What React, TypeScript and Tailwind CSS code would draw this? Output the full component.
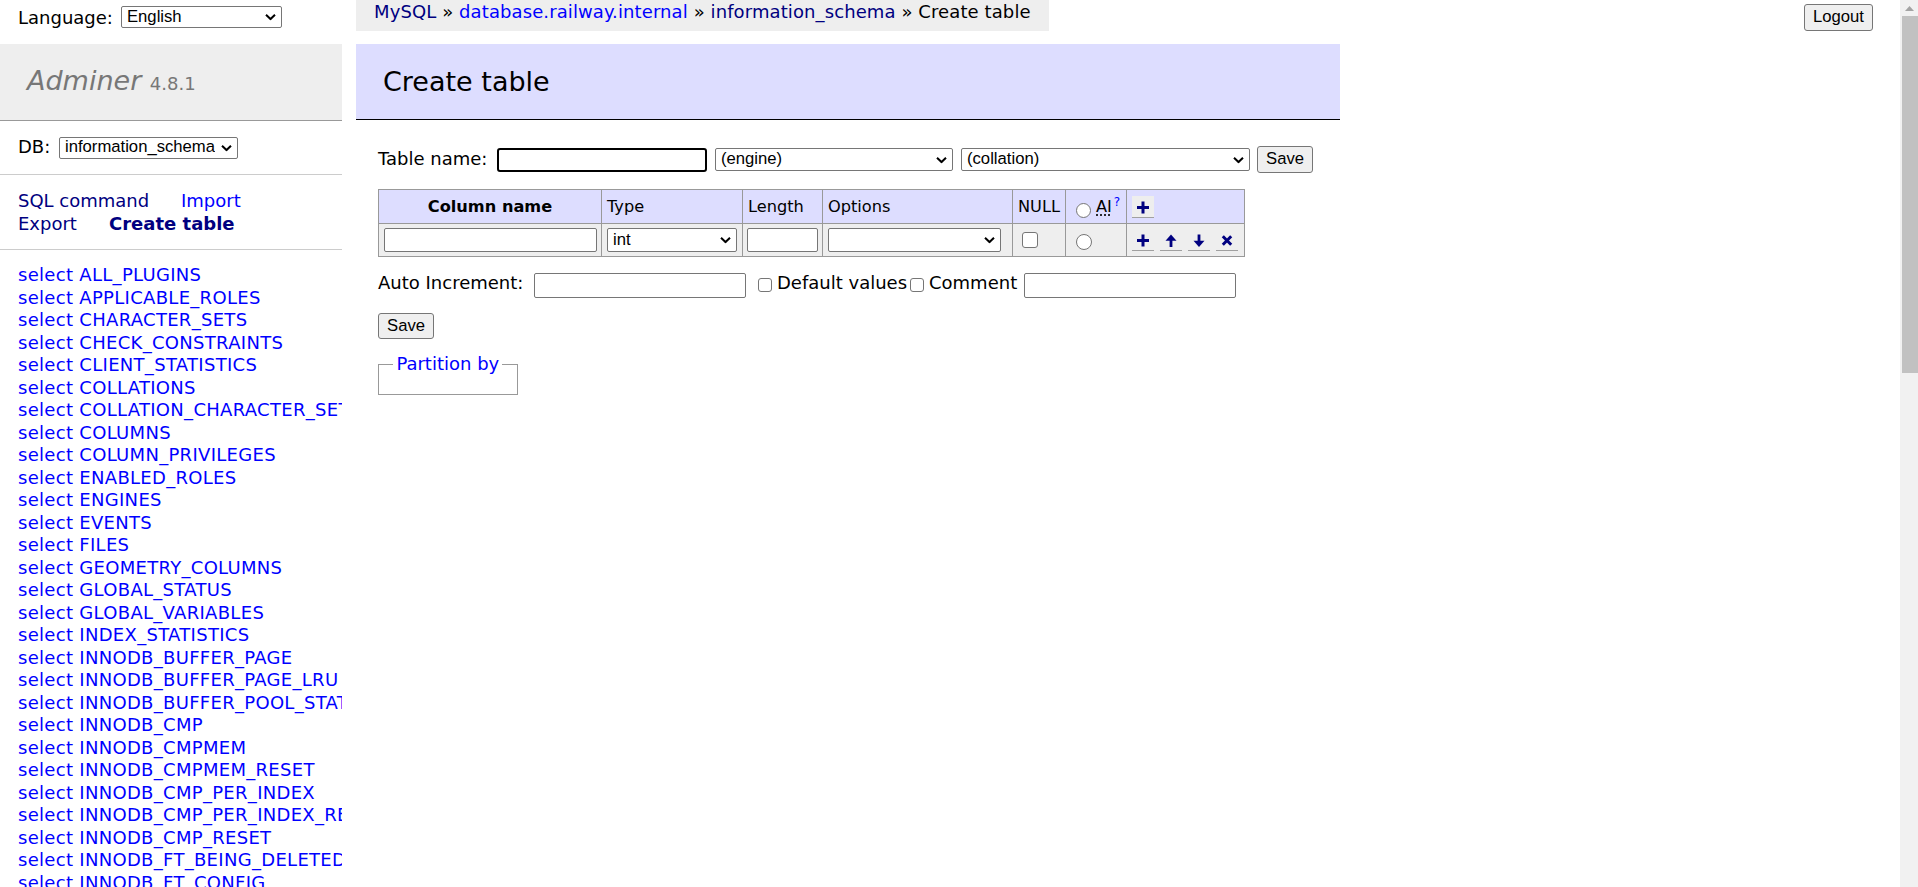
import React from 'react';

const TABLES = [
  'ALL_PLUGINS',
  'APPLICABLE_ROLES',
  'CHARACTER_SETS',
  'CHECK_CONSTRAINTS',
  'CLIENT_STATISTICS',
  'COLLATIONS',
  'COLLATION_CHARACTER_SET_APPLICABILITY',
  'COLUMNS',
  'COLUMN_PRIVILEGES',
  'ENABLED_ROLES',
  'ENGINES',
  'EVENTS',
  'FILES',
  'GEOMETRY_COLUMNS',
  'GLOBAL_STATUS',
  'GLOBAL_VARIABLES',
  'INDEX_STATISTICS',
  'INNODB_BUFFER_PAGE',
  'INNODB_BUFFER_PAGE_LRU',
  'INNODB_BUFFER_POOL_STATS',
  'INNODB_CMP',
  'INNODB_CMPMEM',
  'INNODB_CMPMEM_RESET',
  'INNODB_CMP_PER_INDEX',
  'INNODB_CMP_PER_INDEX_RESET',
  'INNODB_CMP_RESET',
  'INNODB_FT_BEING_DELETED',
  'INNODB_FT_CONFIG',
  'INNODB_FT_DEFAULT_STOPWORD',
  'INNODB_FT_DELETED',
  'INNODB_FT_INDEX_CACHE',
  'INNODB_FT_INDEX_TABLE',
];

function Select({ value, className }: { value: string; className: string }) {
  return (
    <div className={`relative shrink-0 ${className}`}>
      <select
        defaultValue={value}
        className="block h-full w-full appearance-none rounded-[2px] border border-[#767676] bg-white pl-[5px] pr-[22px] font-['Liberation_Sans',Arial,sans-serif] text-[16.67px] leading-none text-black outline-none"
      >
        <option value={value}>{value}</option>
      </select>
      <svg
        className="pointer-events-none absolute right-[6px] top-1/2 -translate-y-1/2"
        width="11"
        height="7"
        viewBox="0 0 11 7"
      >
        <path d="M1 1.2l4.5 4.3L10 1.2" fill="none" stroke="#000" strokeWidth="2" />
      </svg>
    </div>
  );
}

function TextInput({ className }: { className: string }) {
  return (
    <input
      type="text"
      className={`shrink-0 rounded-[2px] border border-[#767676] bg-white px-[3px] font-['Liberation_Sans',Arial,sans-serif] text-[16.67px] outline-none ${className}`}
    />
  );
}

function Button({ label, className }: { label: string; className: string }) {
  return (
    <button
      type="button"
      className={`shrink-0 rounded-[3px] border border-[#767676] bg-[#efefef] px-[8px] font-['Liberation_Sans',Arial,sans-serif] text-[16.67px] leading-none text-black ${className}`}
    >
      {label}
    </button>
  );
}

function Checkbox({ className }: { className: string }) {
  return (
    <input
      type="checkbox"
      className={`shrink-0 appearance-none rounded-[3px] border border-[#767676] bg-white ${className}`}
    />
  );
}

function Radio({ className }: { className: string }) {
  return (
    <input
      type="radio"
      className={`shrink-0 appearance-none rounded-full border border-[#767676] bg-white ${className}`}
    />
  );
}

function IconBtn({ kind }: { kind: 'plus' | 'up' | 'down' | 'x' }) {
  return (
    <span className="inline-flex h-[22px] w-[22px] shrink-0 border-b border-[#a0a0a0] bg-[#eeeeee]">
      <svg width="22" height="21" viewBox="0 0 22 21">
        {kind === 'plus' && (
          <path d="M11 5.5v12M5 11.5h12" stroke="#000080" strokeWidth="3" fill="none" />
        )}
        {kind === 'up' && (
          <g fill="#000080">
            <path d="M11 5.5L16.5 11.8H5.5Z" />
            <rect x="9.6" y="11" width="2.8" height="7" />
          </g>
        )}
        {kind === 'down' && (
          <g fill="#000080">
            <path d="M11 18L16.5 11.7H5.5Z" />
            <rect x="9.6" y="5.5" width="2.8" height="7" />
          </g>
        )}
        {kind === 'x' && (
          <path d="M6.8 7.3l8.4 8.4M15.2 7.3l-8.4 8.4" stroke="#000080" strokeWidth="3" fill="none" />
        )}
      </svg>
    </span>
  );
}

function Sidebar() {
  return (
    <aside className="flex w-[342px] shrink-0 flex-col">
      <h1 className="flex h-[77px] shrink-0 items-center border-b border-[#999] bg-[#eee] px-[27px] text-[27px] leading-[34px] font-normal text-[#777]">
        <span>
          <span className="italic">Adminer</span> <span className="text-[18px]">4.8.1</span>
        </span>
      </h1>
      <div className="flex h-[54px] shrink-0 items-center border-b border-[#ccc] px-[18px]">
        <span className="w-[41px] shrink-0">DB:</span>
        <Select value="information_schema" className="h-[22px] w-[179px]" />
      </div>
      <div className="h-[75px] shrink-0 border-b border-[#ccc] px-[18px] pt-[15px]">
        <div className="flex whitespace-nowrap">
          <a className="w-[163px] shrink-0 text-[#000080]">SQL command</a>
          <a className="text-[#0000ff]">Import</a>
        </div>
        <div className="flex whitespace-nowrap">
          <a className="w-[91px] shrink-0 text-[#000080]">Export</a>
          <a className="font-bold text-[#000080]">Create table</a>
        </div>
      </div>
      <ul className="min-h-0 flex-1 overflow-hidden px-[18px] pt-[14.4px] tracking-[0.3px]">
        {TABLES.map((t) => (
          <li key={t} className="whitespace-nowrap text-[#0000ff]">
            <a>select</a> <a>{t}</a>
          </li>
        ))}
      </ul>
    </aside>
  );
}

function ColumnsTable() {
  const head = 'flex items-center border-r border-b border-[#999] bg-[#ddddff]';
  const cell = 'flex items-center border-r border-b border-[#999] bg-[#eeeeee]';
  return (
    <div className="mt-[16px] grid w-[867px] grid-cols-[223px_141px_80px_190px_53px_61px_118px] grid-rows-[34px_33px] border-l border-t border-[#999] text-[16.2px] leading-[20px]">
      <div className={`${head} justify-center font-bold`}>Column name</div>
      <div className={`${head} pl-[5px]`}>Type</div>
      <div className={`${head} pl-[5px]`}>Length</div>
      <div className={`${head} pl-[5px]`}>Options</div>
      <div className={`${head} pl-[5px]`}>NULL</div>
      <div className={`${head} pl-[10px]`}>
        <Radio className="mt-[8px] h-[15px] w-[15px]" />
        <span className="ml-[5px] underline decoration-dotted underline-offset-[3px]">AI</span>
        <a className="mb-[10px] ml-[2px] text-[12px] leading-none text-[#0000ff]">?</a>
      </div>
      <div className={`${head} pl-[5px]`}>
        <IconBtn kind="plus" />
      </div>

      <div className={`${cell} pl-[5px]`}>
        <TextInput className="h-[24px] w-[213px]" />
      </div>
      <div className={`${cell} pl-[5px]`}>
        <Select value="int" className="h-[24px] w-[130px]" />
      </div>
      <div className={`${cell} pl-[4px]`}>
        <TextInput className="h-[24px] w-[71px]" />
      </div>
      <div className={`${cell} pl-[5px]`}>
        <Select value="" className="h-[24px] w-[173px]" />
      </div>
      <div className={`${cell} pl-[9px]`}>
        <Checkbox className="h-[16px] w-[16px]" />
      </div>
      <div className={`${cell} pl-[10px]`}>
        <Radio className="mt-[3px] h-[16px] w-[16px]" />
      </div>
      <div className={`${cell} gap-[6px] pl-[5px]`}>
        <IconBtn kind="plus" />
        <IconBtn kind="up" />
        <IconBtn kind="down" />
        <IconBtn kind="x" />
      </div>
    </div>
  );
}

function Content() {
  return (
    <main className="ml-[14px] w-[984px] shrink-0">
      <h2 className="flex h-[76px] items-center border-b border-black bg-[#ddddff] px-[27px] text-[27px] leading-[34px] font-normal text-black">
        Create table
      </h2>
      <form className="pl-[22px]">
        <div className="mt-[26px] flex h-[27px] items-center whitespace-nowrap">
          <span className="w-[119px] shrink-0">Table name:</span>
          <input
            type="text"
            className="h-[24px] w-[210px] shrink-0 rounded-[3px] border-2 border-black bg-white outline-none"
          />
          <Select value="(engine)" className="ml-[8px] h-[23px] w-[238px]" />
          <Select value="(collation)" className="ml-[8px] h-[23px] w-[289px]" />
          <Button label="Save" className="ml-[7px] h-[27px] w-[56px]" />
        </div>

        <ColumnsTable />

        <div className="mt-[15px] flex h-[26px] items-center whitespace-nowrap">
          <span className="mb-[4px] w-[156px] shrink-0">Auto Increment:</span>
          <TextInput className="h-[25px] w-[212px]" />
          <Checkbox className="ml-[12px] h-[14px] w-[14px]" />
          <span className="mb-[4px] ml-[5px] w-[130px] shrink-0">Default values</span>
          <Checkbox className="ml-[3px] h-[14px] w-[14px]" />
          <span className="mb-[4px] ml-[5px] w-[89px] shrink-0">Comment</span>
          <TextInput className="ml-[6px] h-[25px] w-[212px]" />
        </div>

        <div className="mt-[15px] flex">
          <Button label="Save" className="h-[26px] w-[56px]" />
        </div>

        <fieldset className="mt-[14px] block w-fit border border-[#999] px-[14.4px] py-[9px]">
          <legend className="px-[3px] text-[#0000ff]">
            <a>Partition by</a>
          </legend>
        </fieldset>
      </form>
    </main>
  );
}

function Scrollbar() {
  return (
    <div className="flex h-full w-[18px] shrink-0 flex-col items-center bg-[#f1f1f1]">
      <div className="flex h-[16px] w-full items-center justify-center">
        <svg width="9" height="5" viewBox="0 0 9 5">
          <path d="M0 5L4.5 0L9 5Z" fill="#a3a3a3" />
        </svg>
      </div>
      <div className="ml-[1px] h-[357px] w-[16px] bg-[#c1c1c1]" />
    </div>
  );
}

export default function App() {
  return (
    <div className="flex h-[887px] w-full overflow-hidden bg-white font-['DejaVu_Sans',Verdana,sans-serif] text-[18px] leading-[22.5px] text-black">
      <div className="flex min-w-0 flex-1 flex-col">
        <div className="flex h-[44px] shrink-0 items-start">
          <div className="flex h-[34px] w-[342px] shrink-0 items-center pl-[18px] leading-[33px]">
            <span className="w-[103px] shrink-0">Language:</span>
            <Select value="English" className="h-[22px] w-[161px]" />
          </div>
          <div className="ml-[14px] h-[31px] whitespace-nowrap bg-[#eee] px-[18px] leading-[24px] tracking-[0.1px]">
            <a className="text-[#000080]">MySQL</a> » <a className="text-[#0000ff]">database.railway.internal</a> »{' '}
            <a className="text-[#000080]">information_schema</a> » Create table
          </div>
          <div className="flex-1" />
          <Button label="Logout" className="mr-[27px] mt-[4px] h-[27px] w-[69px]" />
        </div>
        <div className="flex min-h-0 flex-1">
          <Sidebar />
          <Content />
        </div>
      </div>
      <Scrollbar />
    </div>
  );
}
